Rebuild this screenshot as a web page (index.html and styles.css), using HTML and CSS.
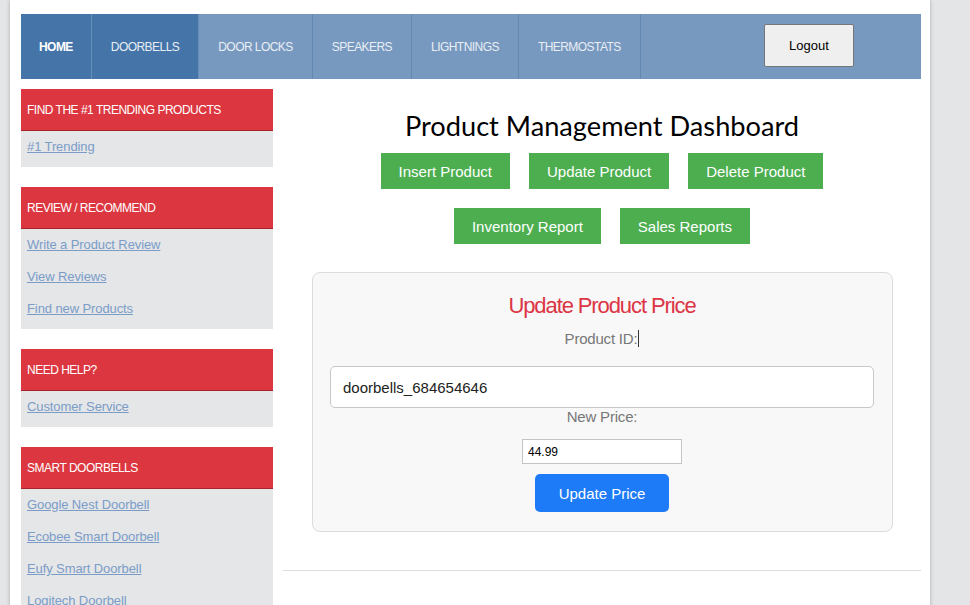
FILE: index.html
```html
<!DOCTYPE html>
<html>
<head>
<meta charset="utf-8">
<link rel="stylesheet" href="styles.css">
</head>
<body>
<div class="page">
  <nav class="nav">
    <a class="nav-item active bold" href="#">HOME</a>
    <a class="nav-item active" href="#">DOORBELLS</a>
    <a class="nav-item" href="#">DOOR LOCKS</a>
    <a class="nav-item" href="#">SPEAKERS</a>
    <a class="nav-item" href="#">LIGHTNINGS</a>
    <a class="nav-item" href="#">THERMOSTATS</a>
    <div class="nav-spacer"></div>
    <button class="logout">Logout</button>
  </nav>
  <div class="content">
    <aside class="sidebar">
      <section class="side-box">
        <h3 class="side-head">FIND THE #1 TRENDING PRODUCTS</h3>
        <ul class="side-list">
          <li><a href="#">#1 Trending</a></li>
        </ul>
      </section>
      <section class="side-box">
        <h3 class="side-head">REVIEW / RECOMMEND</h3>
        <ul class="side-list">
          <li><a href="#">Write a Product Review</a></li>
          <li><a href="#">View Reviews</a></li>
          <li><a href="#">Find new Products</a></li>
        </ul>
      </section>
      <section class="side-box">
        <h3 class="side-head">NEED HELP?</h3>
        <ul class="side-list">
          <li><a href="#">Customer Service</a></li>
        </ul>
      </section>
      <section class="side-box">
        <h3 class="side-head">SMART DOORBELLS</h3>
        <ul class="side-list">
          <li><a href="#">Google Nest Doorbell</a></li>
          <li><a href="#">Ecobee Smart Doorbell</a></li>
          <li><a href="#">Eufy Smart Doorbell</a></li>
          <li><a href="#">Logitech Doorbell</a></li>
        </ul>
      </section>
    </aside>
    <main class="main">
      <h1 class="title">Product Management Dashboard</h1>
      <div class="actions">
        <button class="green">Insert Product</button>
        <button class="green">Update Product</button>
        <button class="green">Delete Product</button>
      </div>
      <div class="actions row2">
        <button class="green">Inventory Report</button>
        <button class="green">Sales Reports</button>
      </div>
      <div class="card">
        <h2 class="card-title">Update Product Price</h2>
        <label class="lbl first">Product ID:<span class="caret"></span></label>
        <input class="wide" type="text" value="doorbells_684654646">
        <label class="lbl">New Price:</label>
        <input class="small" type="text" value="44.99">
        <button class="blue">Update Price</button>
      </div>
      <hr class="rule">
    </main>
  </div>
</div>
</body>
</html>
```
FILE: styles.css
```css
html, body {
  margin: 0;
  padding: 0;
}
body {
  background: #e4e5e7;
  font-family: "Liberation Sans", Arial, sans-serif;
  height: 605px;
  overflow: hidden;
}
.page {
  width: 920px;
  margin-left: 10px;
  min-height: 605px;
  background: #fff;
  box-shadow: 0 0 4px rgba(0,0,0,0.25);
  padding: 14px 9px 0 11px;
  box-sizing: border-box;
}
.nav {
  display: flex;
  align-items: center;
  height: 65px;
  background: #7899bf;
}
.nav-item {
  height: 100%;
  display: flex;
  align-items: center;
  padding: 0 19px;
  color: #e8eef5;
  text-decoration: none;
  font-size: 12px;
  letter-spacing: -0.55px;
  border-right: 1px solid #6288b4;
  box-sizing: border-box;
}
.nav-item.active {
  background: #4474a8;
  border-right-color: #6690bb;
}
.nav-item.bold {
  font-weight: bold;
  color: #fff;
  padding: 0 18px;
}
.nav-spacer {
  flex: 1;
}
.logout {
  width: 90px;
  height: 43px;
  margin-right: 67px;
  margin-top: -2px;
  background: #efefef;
  border: 1px solid #767676;
  border-radius: 2px;
  font-family: "Liberation Sans", Arial, sans-serif;
  font-size: 13px;
  color: #000;
}
.content {
  display: flex;
  margin-top: 10px;
}
.sidebar {
  width: 252px;
  flex: none;
}
.side-box {
  margin-bottom: 20px;
  background: #e4e6e8;
  display: flow-root;
}
.side-head {
  margin: 0;
  height: 42px;
  box-sizing: border-box;
  background: #dc3740;
  border-bottom: 1px solid #a8242a;
  color: #fff;
  font-weight: normal;
  font-size: 12px;
  letter-spacing: -0.5px;
  padding: 0 6px;
  display: flex;
  align-items: center;
}
.side-list {
  list-style: none;
  margin: 0;
  padding: 4px 6px 0;
}
.side-list li {
  height: 22px;
  line-height: 22px;
  margin-bottom: 10px;
}
.side-list a {
  color: #7b9cc7;
  font-size: 13px;
  letter-spacing: -0.1px;
}
.main {
  flex: 1;
  margin-left: 10px;
  text-align: center;
}
.title {
  font-family: Lato, "Liberation Sans", sans-serif;
  font-weight: normal;
  font-size: 27.2px;
  line-height: 34px;
  margin: 20px 0 10px;
  color: #000;
}
.actions {
  display: flex;
  justify-content: center;
  gap: 19px;
}
.actions.row2 {
  margin-top: 19px;
}
.green {
  height: 36px;
  padding: 0 18px;
  background: #4cae4f;
  border: none;
  color: #fff;
  font-family: "Liberation Sans", Arial, sans-serif;
  font-size: 15px;
}
.card {
  width: 581px;
  margin: 28px auto 0;
  box-sizing: border-box;
  background: #f8f8f8;
  border: 1px solid #dcdcdc;
  border-radius: 8px;
  padding: 20px 18px 19px;
  display: flex;
  flex-direction: column;
  align-items: center;
}
.card-title {
  margin: 0;
  font-weight: normal;
  font-size: 22px;
  line-height: 26px;
  letter-spacing: -1.1px;
  color: #dc3545;
}
.lbl {
  display: block;
  font-size: 15px;
  line-height: 18px;
  color: #777;
  letter-spacing: -0.2px;
}
.lbl.first {
  margin-top: 11px;
  margin-bottom: 18px;
}
.caret {
  display: inline-block;
  width: 1px;
  height: 17px;
  background: #333;
  vertical-align: -3px;
  margin-left: 1px;
}
.wide {
  width: 544px;
  height: 42px;
  box-sizing: border-box;
  border: 1px solid #c8c8c8;
  border-radius: 5px;
  padding: 0 12px;
  font-family: "Liberation Sans", Arial, sans-serif;
  font-size: 15px;
  color: #222;
  background: #fff;
}
.small {
  width: 160px;
  height: 25px;
  box-sizing: border-box;
  margin-top: 13px;
  border: 1px solid #c4c4c4;
  padding: 0 5px;
  font-family: "Liberation Sans", Arial, sans-serif;
  font-size: 12px;
  color: #000;
  background: #fff;
}
.blue {
  margin-top: 10px;
  width: 134px;
  height: 38px;
  background: #1e7bf7;
  border: none;
  border-radius: 5px;
  color: #fff;
  font-family: "Liberation Sans", Arial, sans-serif;
  font-size: 15px;
}
.rule {
  margin: 38px 0 0;
  border: none;
  border-top: 1px solid #ddd;
}
```
